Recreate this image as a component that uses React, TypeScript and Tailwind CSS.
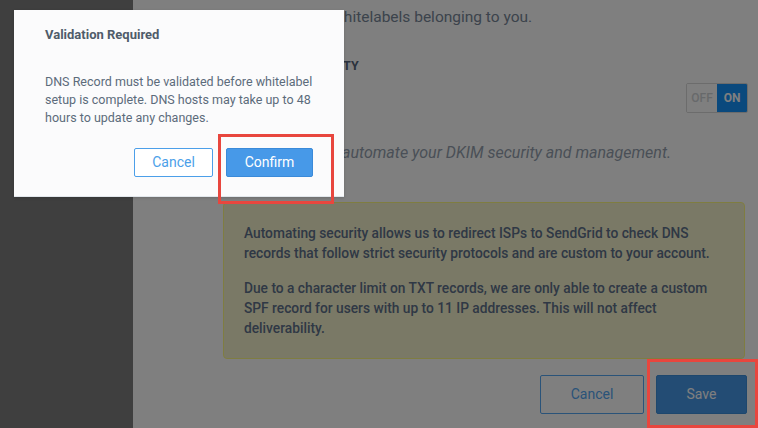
import { ReactNode } from 'react';

import clsx from 'clsx';

interface HighlightProps {
  className: string;
}

// red annotation box drawn over the screenshot
const Highlight = ({ className }: HighlightProps) => (
  <div className={clsx('pointer-events-none absolute border-[3px] border-[#e8463e]', className)} />
);

interface ButtonProps {
  children: ReactNode;
  primary?: boolean;
  className?: string;
}

const Button = ({ children, primary, className }: ButtonProps) => (
  <button
    className={clsx(
      'flex items-center justify-center rounded-[2px] border text-[14px]',
      primary ? 'border-[#3a8ad9] bg-[#4799e8] text-white' : 'border-[#4c9fe9] bg-white text-[#4c9fe9]',
      className,
    )}
  >
    {children}
  </button>
);

const Toggle = () => (
  <div className="-mr-px flex h-[30px] overflow-hidden rounded-[2px] border border-[#d8d8d8] text-[12px] font-medium">
    <span className="flex w-[30px] items-center justify-center bg-white text-[#cfd3d6]">OFF</span>
    <span className="flex w-[30px] items-center justify-center bg-[#1592fb] font-bold text-white">ON</span>
  </div>
);

const SettingsPage = () => (
  <div className="flex h-full w-full">
    <aside className="w-[133px] shrink-0 bg-[#7f7f7f]" />
    <main className="flex min-w-0 flex-1 flex-col bg-white pr-[11px] pl-[90px] pt-[5px]">
      <p className="h-[24px] pl-[4px] text-[15.5px] leading-[24px] text-[#788798]">
        Manage all the whitelabels belonging to you.
      </p>
      <h3 className="mt-[28px] text-[12.5px] font-bold leading-[18px] text-[#56657a]">AUTOMATED SECURITY</h3>
      <div className="mt-[8px] flex items-center justify-end">
        <Toggle />
      </div>
      <p className="mt-[28px] pl-[4px] text-[16px] italic leading-[24px] text-[#949fae]">
        Use SendGrid to automate your DKIM security and management.
      </p>
      <div className="mt-[37px] mr-[2px] rounded-[4px] border border-[#fffa82] bg-[#f5f3cd] px-[20px] pt-[20px] pb-[20px] text-[13.75px] font-medium leading-[20px] text-[#5e708a]">
        <p>
          Automating security allows us to redirect ISPs to SendGrid to check DNS records that follow strict
          security protocols and are custom to your account.
        </p>
        <p className="mt-[15px]">
          Due to a character limit on TXT records, we are only able to create a custom SPF record for users with
          up to 11 IP addresses. This will not affect deliverability.
        </p>
      </div>
      <div className="mt-[16px] flex justify-end gap-[12px]">
        <Button className="h-[39px] w-[104px] border-[#54a6f2] text-[#54a6f2]">Cancel</Button>
        <Button primary className="h-[39px] w-[91px] border-[#3d8fdb] bg-[#439ced]">
          Save
        </Button>
      </div>
    </main>
  </div>
);

const ValidationModal = () => (
  <div className="absolute top-[10px] left-[14px] flex h-[187px] w-[330px] flex-col border-b border-[#e2e7ec] bg-[#fbfbfc] px-[31px] pt-[16px] shadow-[0_1px_3px_rgba(0,0,0,0.15)]">
    <h2 className="text-[13px] font-bold leading-[18px] text-[#4f5c6a]">Validation Required</h2>
    <p className="mt-[29px] text-[12.5px] leading-[18px] text-[#5c6b7b]">
      DNS Record must be validated before whitelabel setup is complete. DNS hosts may take up to 48 hours to
      update any changes.
    </p>
    <div className="mt-[21px] flex justify-end gap-[13px]">
      <Button className="h-[29px] w-[79px]">Cancel</Button>
      <Button primary className="h-[29px] w-[87px]">
        Confirm
      </Button>
    </div>
  </div>
);

export default function App() {
  return (
    <div className="relative h-[428px] w-[758px] overflow-hidden font-['Roboto',sans-serif]">
      <SettingsPage />
      <div className="absolute inset-0 bg-black/50" />
      <ValidationModal />
      <Highlight className="top-[134px] left-[218px] h-[70px] w-[116px]" />
      <Highlight className="top-[359px] left-[647px] h-[69px] w-[111px]" />
    </div>
  );
}
